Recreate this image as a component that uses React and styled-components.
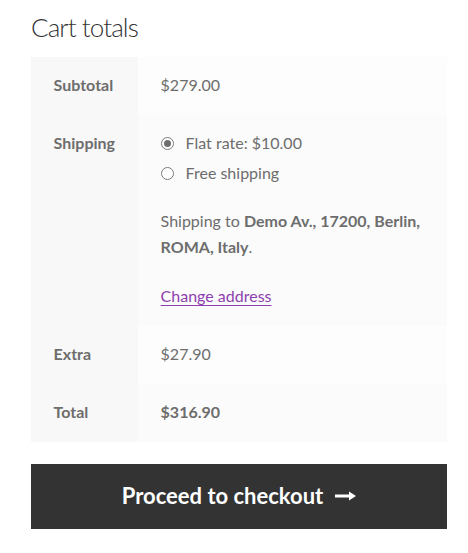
import styled, { createGlobalStyle } from 'styled-components';

const GlobalStyle = createGlobalStyle`
    body {
        margin: 0;
        background: #ffffff;
        font-family: Lato, 'Liberation Sans', sans-serif;
        color: #6d6d6d;
        font-size: 16px;
    }
`;

const Wrapper = styled.div`
    width: 416px;
    padding: 11px 0 0 31px;
`;

const Title = styled.h2`
    margin: 0 0 14px;
    font-size: 26px;
    line-height: 32px;
    font-weight: 300;
    letter-spacing: -0.9px;
    color: #333333;
`;

const Totals = styled.table`
    width: 416px;
    border-collapse: collapse;
    border-spacing: 0;
    margin: 0 0 22px;
`;

const Row = styled.tr`
    td {
        background: ${(p) => (p.even ? '#fbfbfb' : '#fdfdfd')};
    }
`;

const Head = styled.th`
    width: 107px;
    box-sizing: border-box;
    padding: 15px 22.6px 17px;
    text-align: left;
    vertical-align: top;
    background: #f8f8f8;
    font-weight: 700;
    line-height: 26px;
`;

const Cell = styled.td`
    padding: 15px 22.6px 17px;
    vertical-align: top;
    line-height: 26px;
    font-weight: ${(p) => (p.strong ? 700 : 400)};
`;

const Methods = styled.ul`
    list-style: none;
    margin: 0 0 22px;
    padding: 0;
`;

const Method = styled.li`
    display: flex;
    align-items: center;
    gap: 12px;
    margin-bottom: 4px;
`;

const Radio = styled.span`
    width: 11px;
    height: 11px;
    border-radius: 50%;
    border: 1px solid #7a7a7a;
    background: #fff;
    display: flex;
    align-items: center;
    justify-content: center;
    flex: none;

    &::after {
        content: '';
        width: 7px;
        height: 7px;
        border-radius: 50%;
        background: ${(p) => (p.checked ? '#6f6f6f' : 'transparent')};
    }
`;

const Destination = styled.p`
    margin: 0 0 23px;
    line-height: 26px;
    strong {
        font-weight: 700;
    }
`;

const ChangeLink = styled.a`
    color: #8e3fae;
    text-decoration: underline;
    text-underline-offset: 3px;
    cursor: pointer;
`;

const CheckoutButton = styled.button`
    width: 416px;
    height: 65px;
    padding: 0 0 2px;
    border: 0;
    background: #333333;
    color: #ffffff;
    font-family: inherit;
    font-size: 22px;
    font-weight: 700;
    display: flex;
    align-items: center;
    justify-content: center;
    gap: 12px;
    cursor: pointer;
`;

const Arrow = () => (
    <svg width="21" height="10" viewBox="0 0 21 10">
        <path d="M0 5h15" stroke="#fff" strokeWidth="3" />
        <path d="M14 0.5L21 5L14 9.5Z" fill="#fff" />
    </svg>
);

const App = () => {
    return (
        <Wrapper>
            <GlobalStyle />
            <Title>Cart totals</Title>
            <Totals>
                <tbody>
                    <Row>
                        <Head>Subtotal</Head>
                        <Cell>$279.00</Cell>
                    </Row>
                    <Row even>
                        <Head>Shipping</Head>
                        <Cell>
                            <Methods>
                                <Method>
                                    <Radio checked />
                                    Flat rate: $10.00
                                </Method>
                                <Method>
                                    <Radio />
                                    Free shipping
                                </Method>
                            </Methods>
                            <Destination>
                                Shipping to <strong>Demo Av., 17200, Berlin,</strong>
                                <br />
                                <strong>ROMA, Italy</strong>.
                            </Destination>
                            <ChangeLink>Change address</ChangeLink>
                        </Cell>
                    </Row>
                    <Row>
                        <Head>Extra</Head>
                        <Cell>$27.90</Cell>
                    </Row>
                    <Row even>
                        <Head>Total</Head>
                        <Cell strong>$316.90</Cell>
                    </Row>
                </tbody>
            </Totals>
            <CheckoutButton>
                Proceed to checkout
                <Arrow />
            </CheckoutButton>
        </Wrapper>
    );
};

export default App;
